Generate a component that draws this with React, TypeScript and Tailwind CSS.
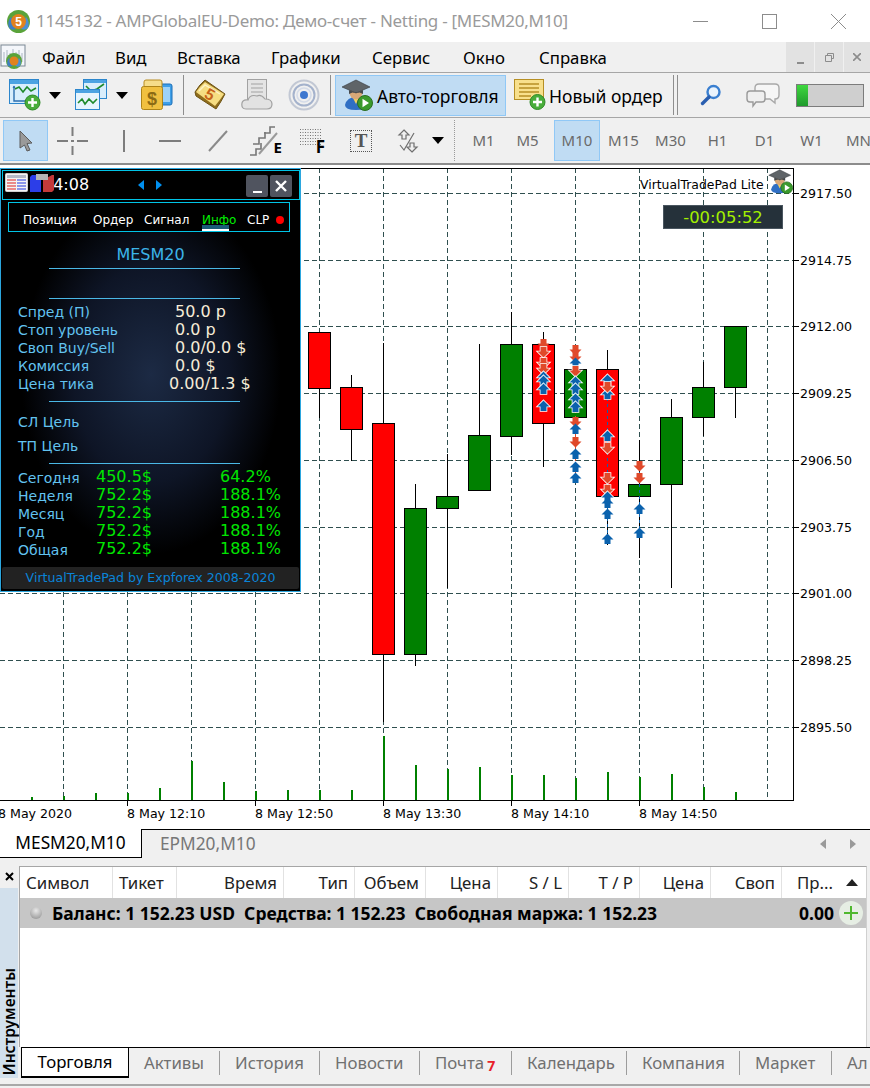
import type { ReactNode } from "react";

const ui = "font-['Noto_Sans',sans-serif]";
const pad = "font-['DejaVu_Sans',sans-serif]";

const HGRID = [193, 260, 326, 393, 460, 527, 593, 660, 727];
const PRICES = ["2917.50", "2914.75", "2912.00", "2909.25", "2906.50", "2903.75", "2901.00", "2898.25", "2895.50"];
const VGRID = [63, 127, 191, 255, 319, 383, 447, 511, 575, 639, 703, 767];
const TIMES: [number, string][] = [
  [-2, "8 May 2020"],
  [127, "8 May 12:10"],
  [255, "8 May 12:50"],
  [383, "8 May 13:30"],
  [511, "8 May 14:10"],
  [639, "8 May 14:50"],
];
const VOLUMES: [number, number][] = [
  [31, 3], [63, 4], [95, 7], [127, 7], [159, 12], [191, 39], [223, 18], [255, 9], [287, 10], [319, 10], [351, 10],
  [383, 64], [415, 35], [447, 31], [479, 33], [511, 25], [543, 25], [575, 22], [607, 28], [639, 23], [671, 26],
  [703, 13], [735, 8],
];
// x, wick top, body top, body bottom, wick bottom, colour
const CANDLES: [number, number, number, number, number, string][] = [
  [319, 332, 332, 388, 418, "#ff0000"],
  [351, 375, 387, 429, 461, "#ff0000"],
  [383, 343, 423, 654, 722, "#ff0000"],
  [415, 484, 508, 654, 666, "#008000"],
  [447, 454, 496, 508, 588, "#008000"],
  [479, 344, 435, 490, 490, "#008000"],
  [511, 312, 344, 436, 455, "#008000"],
  [543, 332, 344, 423, 467, "#ff0000"],
  [575, 369, 369, 417, 417, "#008000"],
  [607, 350, 369, 496, 545, "#ff0000"],
  [639, 440, 484, 496, 558, "#008000"],
  [671, 399, 417, 484, 588, "#008000"],
  [703, 362, 387, 417, 436, "#008000"],
  [735, 326, 326, 387, 418, "#008000"],
];
// x, y, direction, outlined
const MARKS: [number, number, "u" | "d", boolean][] = [
  [543, 344, "d", false], [543, 352, "d", true], [543, 363, "d", true], [543, 369, "d", true],
  [543, 377, "u", true], [543, 381, "u", true], [543, 389, "u", true], [543, 406, "u", true],
  [575, 350, "d", false], [575, 357, "d", false], [575, 363, "u", false], [575, 371, "d", true],
  [575, 382, "u", true], [575, 389, "u", true], [575, 399, "u", true], [575, 407, "u", true],
  [575, 422, "d", false], [575, 429, "u", false], [575, 442, "d", false], [575, 454, "u", false],
  [575, 467, "u", false], [575, 478, "u", false],
  [607, 380, "u", true], [607, 394, "u", true], [607, 387, "d", true], [607, 436, "u", true], [607, 448, "d", true],
  [607, 478, "d", true], [607, 490, "d", true], [607, 497, "u", true], [607, 503, "u", false],
  [607, 514, "u", false], [607, 539, "u", false],
  [639, 466, "d", false], [639, 478, "d", false], [639, 509, "u", false], [639, 533, "u", false],
];

function Chart() {
  return (
    <svg width="870" height="663" viewBox="0 166 870 663" className="block">
      <g stroke="#2f4f4f" strokeDasharray="5 3" shapeRendering="crispEdges">
        {HGRID.map((y) => <line key={y} x1="0" x2="793" y1={y + 0.5} y2={y + 0.5} />)}
        {VGRID.map((x) => <line key={x} x1={x + 0.5} x2={x + 0.5} y1="168" y2="800" />)}
      </g>
      <g fill="#008000" shapeRendering="crispEdges">
        {VOLUMES.map(([x, h]) => <rect key={x} x={x} y={800 - h} width="2" height={h} />)}
      </g>
      {CANDLES.map(([x, wt, bt, bb, wb, c]) => (
        <g key={x} shapeRendering="crispEdges">
          <line x1={x + 0.5} x2={x + 0.5} y1={wt} y2={wb} stroke="#000" />
          <rect x={x - 10.5} y={bt + 0.5} width="22" height={bb - bt} fill={c} stroke="#000" />
        </g>
      ))}
      <g strokeDasharray="3 3" shapeRendering="crispEdges">
        <line x1="575.5" x2="575.5" y1="350" y2="478" stroke="#e0492a" />
        <line x1="607.5" x2="607.5" y1="380" y2="540" stroke="#0b62ad" />
        <line x1="639.5" x2="639.5" y1="466" y2="533" stroke="#0b62ad" />
      </g>
      {MARKS.map(([x, y, d, o], i) => (
        <path
          key={i}
          transform={`translate(${x + 0.5} ${y}) scale(1 ${d === "u" ? 1 : -1})`}
          d="M0 -5.5 L6 0.5 L3 0.5 L3 5 L-3 5 L-3 0.5 L-6 0.5 Z"
          fill={d === "u" ? "#0b62ad" : "#e0492a"}
          stroke={o ? "#fff" : "none"}
          strokeWidth="1.6"
          paintOrder="stroke"
        />
      ))}
      <g stroke="#000" shapeRendering="crispEdges">
        <line x1="0" x2="794" y1="168.5" y2="168.5" />
        <line x1="793.5" x2="793.5" y1="168" y2="801" />
        <line x1="0" x2="794" y1="800.5" y2="800.5" />
        {HGRID.map((y) => <line key={y} x1="793" x2="799" y1={y + 0.5} y2={y + 0.5} />)}
        {TIMES.slice(1).map(([x]) => <line key={x} x1={x + 0.5} x2={x + 0.5} y1="800" y2="806" />)}
      </g>
      <g fontFamily="'DejaVu Sans',sans-serif" fontSize="12.6" fill="#000">
        {PRICES.map((p, i) => <text key={p} x="800" y={HGRID[i] + 5}>{p}</text>)}
        {TIMES.map(([x, t]) => <text key={t} x={x} y="818">{t}</text>)}
        <text x="640" y="189" fontSize="12.4">VirtualTradePad Lite</text>
      </g>
      <g transform="translate(768 169)"><HatIcon size={25} /></g>
      <rect x="663.5" y="205.5" width="119" height="23" fill="#25313a" stroke="#4a5660" />
      <text x="723" y="223" textAnchor="middle" fontFamily="'DejaVu Sans',sans-serif" fontSize="16.4" fill="#a4f000">-00:05:52</text>
    </svg>
  );
}

function HatIcon({ size = 32 }: { size?: number }) {
  return (
    <svg width={size} height={size} viewBox="0 0 32 32">
      <path d="M4 26 Q6 18 15 18 Q24 18 26 26 Q26 31 15 31 Q4 31 4 26Z" fill="#2f6fc4" />
      <path d="M12 19 L15 25 L18 19Z" fill="#f2d060" />
      <ellipse cx="15" cy="14" rx="6.5" ry="6.5" fill="#d8a878" />
      <path d="M1 8 L15 1 L29 8 L15 14Z" fill="#5f6468" stroke="#33383c" strokeWidth=".6" />
      <path d="M8 11 L8 15 Q15 11 22 15 L22 11 L15 14Z" fill="#44494d" />
      <circle cx="24" cy="24" r="7.5" fill="#3a9a2c" stroke="#2b6e22" />
      <path d="M21.5 19.8 L28 24 L21.5 28.2Z" fill="#fff" />
    </svg>
  );
}

function AppLogo() {
  return (
    <svg width="25" height="25" viewBox="0 0 25 25">
      <circle cx="12.5" cy="12.5" r="11.5" fill="#5aa33a" />
      <path d="M3 19 Q1 12 5 8 L11 18 Q8 23 3 19Z" fill="#3e7fc4" />
      <path d="M22 19 Q24 12 20 8 L14 18 Q17 23 22 19Z" fill="#4a90d4" />
      <circle cx="12.5" cy="12.5" r="7.5" fill="#e0821e" />
      <text x="12.5" y="17" textAnchor="middle" fontSize="12" fontWeight="700" fontFamily="'Liberation Sans',sans-serif" fill="#fff">5</text>
    </svg>
  );
}

function MenuLogo() {
  return (
    <svg width="26" height="26" viewBox="0 0 26 26">
      <rect x="1" y="1" width="24" height="21" fill="#f4f6fa" stroke="#7b8794" />
      <path d="M4 18 V8 M7 18 V6 M10 18 V9 M13 18 V5 M16 18 V8 M19 18 V6 M22 18 V9" stroke="#a9b4c2" strokeWidth="1" />
      <circle cx="14" cy="17" r="8" fill="#5aa33a" />
      <path d="M8 22 Q6 17 9 14 L13 21 Q11 24 8 22Z" fill="#3e7fc4" />
      <path d="M20 22 Q22 17 19 14 L15 21 Q17 24 20 22Z" fill="#4a90d4" />
      <circle cx="14" cy="17" r="4.5" fill="#e0821e" />
    </svg>
  );
}

function GreenPlus({ cx, cy, r }: { cx: number; cy: number; r: number }) {
  return (
    <g>
      <circle cx={cx} cy={cy} r={r} fill="#49ad3b" stroke="#2e8a27" />
      <path d={`M${cx - r + 3} ${cy} H${cx + r - 3} M${cx} ${cy - r + 3} V${cy + r - 3}`} stroke="#fff" strokeWidth="2.4" />
    </g>
  );
}

function NewChartIcon() {
  return (
    <svg width="32" height="32" viewBox="0 0 32 32">
      <rect x=".5" y=".5" width="29" height="24" fill="#d9eefc" stroke="#2c86cc" />
      <rect x="1" y="1" width="28" height="4" fill="#4ba3e2" />
      <path d="M6 10 L10 8 L14 13 L18 8 L22 12 L27 9" fill="none" stroke="#1f8a2c" strokeWidth="1.6" />
      <path d="M5 7 V22 H26" fill="none" stroke="#2c6fb0" strokeWidth="1.4" />
      <path d="M3.5 9 L5 6.5 L6.5 9Z M24 20.5 L26.5 22 L24 23.5Z" fill="#2c6fb0" />
      <GreenPlus cx={23.5} cy={23.5} r={7.5} />
    </svg>
  );
}

function ProfilesIcon() {
  return (
    <svg width="32" height="32" viewBox="0 0 32 32">
      <rect x="8.5" y=".5" width="23" height="19" fill="#d9eefc" stroke="#2c86cc" />
      <rect x="9" y="1" width="22" height="3" fill="#4ba3e2" />
      <path d="M11 7 L16 12 L22 10 L29 5" fill="none" stroke="#1f8a2c" strokeWidth="1.6" />
      <rect x=".5" y="10.5" width="24" height="20" fill="#e6f4fd" stroke="#2c86cc" />
      <rect x="1" y="11" width="23" height="3" fill="#4ba3e2" />
      <path d="M3 24 L7 20 L10 25 L14 20 L18 24 L22 20" fill="none" stroke="#1f8a2c" strokeWidth="1.6" />
    </svg>
  );
}

function DollarIcon() {
  return (
    <svg width="32" height="32" viewBox="0 0 32 32">
      <rect x="11" y="5" width="20" height="21" rx="2" fill="#3f9fe8" stroke="#1b6fb8" />
      <rect x="22" y="8" width="7" height="15" fill="#9dd2f7" />
      <rect x="3" y="1" width="18" height="8" rx="2" fill="#f6dd8a" stroke="#b88c20" />
      <rect x=".5" y="7.5" width="21" height="23" rx="2" fill="#f0c040" stroke="#ae8418" />
      <text x="11" y="26" textAnchor="middle" fontSize="18" fontWeight="700" fontFamily="'Liberation Sans',sans-serif" fill="#8c6a14">$</text>
    </svg>
  );
}

function BookIcon() {
  return (
    <svg width="32" height="32" viewBox="0 0 32 32">
      <path d="M1 13 Q6 5 11 1 L31 15 Q27 23 22 30 L2 17Z" fill="#8f6d1c" stroke="#6d5314" />
      <path d="M2 13 Q6 7 11 3 L30 15 Q26 21 21 27Z" fill="#f6dd82" />
      <path d="M5 12 L11 6 L26 15" fill="none" stroke="#fff3c4" strokeWidth="1.4" />
      <text x="16" y="21" textAnchor="middle" fontSize="16" fontWeight="700" fontFamily="'Liberation Sans',sans-serif" fill="#c8641a" transform="rotate(30 16 15)">5</text>
    </svg>
  );
}

function CloudIcon() {
  return (
    <svg width="32" height="32" viewBox="0 0 32 32">
      <rect x="6.5" y=".5" width="19" height="22" fill="#e4e4e4" stroke="#a2a2a2" />
      <path d="M10 5 H22 M10 9 H22 M10 13 H22" stroke="#b8b8b8" strokeWidth="1.5" />
      <path d="M5 30 Q0 30 1 24 Q2 20 7 21 Q9 15 16 17 Q20 15 24 20 Q31 20 31 25 Q31 30 26 30Z" fill="#e2e2e2" stroke="#a2a2a2" strokeWidth="1.2" />
    </svg>
  );
}

function SignalIcon() {
  return (
    <svg width="32" height="32" viewBox="0 0 32 32" fill="none">
      <circle cx="16" cy="16" r="14.5" stroke="#c2c8d4" strokeWidth="2" />
      <circle cx="16" cy="16" r="10.5" stroke="#a4b2cc" strokeWidth="2" />
      <circle cx="16" cy="16" r="7" stroke="#d4dbe8" strokeWidth="1.6" />
      <circle cx="16" cy="16" r="4" fill="#3f78cf" />
    </svg>
  );
}

function NoteIcon() {
  return (
    <svg width="32" height="32" viewBox="0 0 32 32">
      <rect x=".5" y=".5" width="29" height="20" fill="#f8e08c" stroke="#b68f24" />
      <path d="M5 5 H25 M5 9 H25 M5 13 H25 M5 17 H17" stroke="#b68f24" strokeWidth="1.3" />
      <GreenPlus cx={23.5} cy={23} r={7.5} />
    </svg>
  );
}

function MagnifierIcon() {
  return (
    <svg width="22" height="22" viewBox="0 0 22 22" fill="none">
      <circle cx="13.5" cy="8" r="6" stroke="#3a7fd0" strokeWidth="2.4" fill="#eaf3fc" />
      <path d="M9 13 L2.5 19.5" stroke="#2a5fb0" strokeWidth="3.4" strokeLinecap="round" />
    </svg>
  );
}

function ChatIcon() {
  return (
    <svg width="34" height="26" viewBox="0 0 34 26">
      <path d="M13 2 H29 Q33 2 33 6 V13 Q33 17 29 17 L29 21 L24 17 H13 Q9 17 9 13 V6 Q9 2 13 2Z" fill="#f6f6f6" stroke="#a8a8a8" strokeWidth="1.4" />
      <path d="M4 9 H16 Q19 9 19 12 V17 Q19 20 16 20 H10 L7 24 L7 20 H4 Q1 20 1 17 V12 Q1 9 4 9Z" fill="#efefef" stroke="#999" strokeWidth="1.4" />
    </svg>
  );
}

function DropArrow() {
  return <div className="w-0 h-0 border-x-[6px] border-x-transparent border-t-[7px] border-t-black" />;
}

function Sep({ ml }: { ml: string }) {
  return <div className={`${ml} w-px self-stretch my-[2px] bg-[#8e8e8e]`} />;
}

function ToolbarOne() {
  return (
    <div className={`${ui} h-[44px] flex items-center pl-[9px] text-[17.5px] text-black`}>
      <NewChartIcon />
      <div className="ml-[8px]"><DropArrow /></div>
      <div className="ml-[14px]"><ProfilesIcon /></div>
      <div className="ml-[9px]"><DropArrow /></div>
      <div className="ml-[13px]"><DollarIcon /></div>
      <Sep ml="ml-[10px]" />
      <div className="ml-[10px]"><BookIcon /></div>
      <div className="ml-[15px]"><CloudIcon /></div>
      <div className="ml-[15px]"><SignalIcon /></div>
      <Sep ml="ml-[10px]" />
      <div className="ml-[4px] w-[171px] h-[41px] flex items-center pl-[5px] bg-[#c0dcf3] border border-[#90c8f6]">
        <HatIcon />
        <span className="ml-[4px] pt-[3px] whitespace-nowrap">Авто-торговля</span>
      </div>
      <div className="ml-[8px]"><NoteIcon /></div>
      <span className="ml-[3px] pt-[3px] w-[117px] whitespace-nowrap">Новый ордер</span>
      <Sep ml="ml-[7px]" />
      <Sep ml="ml-[3px]" />
      <div className="ml-[22px]"><MagnifierIcon /></div>
      <div className="ml-[24px]"><ChatIcon /></div>
      <div className="ml-[16px] w-[68px] h-[23px] bg-[#cfcfcf] border border-[#7c7c7c]">
        <div className="w-[11px] h-full bg-gradient-to-b from-[#3fd83f] to-[#1f9a2c]" />
      </div>
    </div>
  );
}

function ToolGlyph({ children, w, ml }: { children: ReactNode; w: number; ml: string }) {
  return (
    <svg width={w} height="32" viewBox={`0 0 ${w} 32`} className={ml} fill="none">
      {children}
    </svg>
  );
}

const TIMEFRAMES: [string, string][] = [
  ["M1", "w-[47px]"],
  ["M5", "w-[47px] pr-[6px]"],
  ["M10", "w-[46px] bg-[#c0dcf3] border border-[#90c8f6]"],
  ["M15", "w-[47px]"],
  ["M30", "w-[47px]"],
  ["H1", "w-[47px]"],
  ["D1", "w-[47px]"],
  ["W1", "w-[47px]"],
  ["MN", "w-[47px]"],
];

function ToolbarTwo() {
  return (
    <div className={`${ui} h-[45px] flex items-center pl-[3px] overflow-hidden`}>
      <div className="w-[45px] h-[41px] flex items-center justify-center shrink-0 bg-[#c0dcf3] border border-[#90c8f6]">
        <svg width="16" height="22" viewBox="0 0 16 22">
          <path d="M2 1 L14 13 L9 13.5 L12 20 L9 21 L6.5 15 L2 18Z" fill="#9a9a9a" stroke="#5c5c5c" />
        </svg>
      </div>
      <ToolGlyph w={31} ml="ml-[9px] shrink-0">
        <path d="M0 16 H11 M20 16 H31 M15.5 2 V11 M15.5 21 V30 M14 16 H17" stroke="#7d7d7d" strokeWidth="2" />
      </ToolGlyph>
      <Sep ml="ml-[10px]" />
      <ToolGlyph w={4} ml="ml-[24px] shrink-0"><path d="M2 5 V27" stroke="#7d7d7d" strokeWidth="2" /></ToolGlyph>
      <ToolGlyph w={22} ml="ml-[33px] shrink-0"><path d="M0 16 H22" stroke="#7d7d7d" strokeWidth="2" /></ToolGlyph>
      <ToolGlyph w={20} ml="ml-[27px] shrink-0"><path d="M1 26 L19 6" stroke="#8a8a8a" strokeWidth="2" /></ToolGlyph>
      <div className="ml-[21px] shrink-0 w-[33px] h-[32px] relative">
        <svg width="33" height="32" viewBox="0 0 33 32" fill="none">
          <path d="M1 30 L7 30 L7 24 L12 24 L12 18 M4 19 L10 19 L10 13 L16 13 L16 7 M15 8 L21 8 L21 2 L26 2" stroke="#777" strokeWidth="1.6" />
          <path d="M10 29 L28 8" stroke="#9a9a9a" strokeWidth="2" />
        </svg>
        <span className="absolute right-0 bottom-[2px] text-[15px] font-bold leading-none text-black">E</span>
      </div>
      <div className="ml-[18px] shrink-0 w-[25px] h-[32px] relative">
        <svg width="22" height="18" viewBox="0 0 22 18" stroke="#777" strokeDasharray="1 1.5" className="mt-[3px]">
          {[1, 4, 7, 10, 13, 16].map((y) => <line key={y} x1="0" x2="22" y1={y + 0.5} y2={y + 0.5} />)}
        </svg>
        <span className="absolute right-0 bottom-[2px] text-[17px] font-bold leading-none text-black">F</span>
      </div>
      <div className="ml-[25px] shrink-0 w-[22px] h-[22px] flex items-center justify-center border border-dotted border-[#555] font-['Liberation_Serif',serif] text-[19px] font-bold text-[#555] leading-none">T</div>
      <ToolGlyph w={22} ml="ml-[25px] shrink-0">
        <path d="M7 5 L12 10 L9 10 L9 14 L5 14 L5 10 L2 10Z M15 27 L20 22 L17 22 L17 18 L13 18 L13 22 L10 22Z" stroke="#6f6f6f" strokeWidth="1.2" />
        <path d="M3 20 L7 25 L17 8" stroke="#6f6f6f" strokeWidth="1.2" />
      </ToolGlyph>
      <div className="ml-[13px] shrink-0"><DropArrow /></div>
      <Sep ml="ml-[7px]" />
      <div className="ml-[3px] w-px self-stretch my-[2px] border-l border-dotted border-[#9a9a9a] shrink-0" />
      <div className="ml-[5px] flex text-[15px] text-[#6a6a6a] shrink-0">
        {TIMEFRAMES.map(([t, cls]) => (
          <div key={t} className={`${cls} h-[41px] flex items-center justify-center`}>
            {t}
          </div>
        ))}
      </div>
    </div>
  );
}

const SPEC: [string, string][] = [
  ["Спред (П)", "50.0 p"],
  ["Стоп уровень", "0.0 p"],
  ["Своп Buy/Sell", "0.0/0.0 $"],
  ["Комиссия", "0.0 $"],
  ["Цена тика", "0.00/1.3 $"],
];
const STATS: [string, string, string][] = [
  ["Сегодня", "450.5$", "64.2%"],
  ["Неделя", "752.2$", "188.1%"],
  ["Месяц", "752.2$", "188.1%"],
  ["Год", "752.2$", "188.1%"],
  ["Общая", "752.2$", "188.1%"],
];

function PadLine({ mt }: { mt: string }) {
  return <div className={`${mt} ml-[48px] w-[191px] h-px shrink-0 bg-[#4ab8e6]`} />;
}

function TradePad() {
  return (
    <div
      className={`${pad} absolute left-0 top-[3px] w-[301px] h-[424px] flex flex-col border border-[#2ba6de] bg-[radial-gradient(ellipse_130px_180px_at_150px_205px,#1c2a44_0%,#0e1526_60%,#000_100%)] text-[14px] text-[#62c3f0]`}
    >
      <div className="relative mt-px ml-px w-[298px] h-[30px] shrink-0 flex items-center border border-[#00c4e6] bg-black">
        <span className="ml-[40px] w-[46px] text-[16px] text-white">14:08</span>
        <svg className="absolute left-[2px] top-[2px]" width="23" height="19" viewBox="0 0 23 19">
          <rect x=".5" y=".5" width="22" height="18" rx="1" fill="#f4f4f4" stroke="#cfcfcf" />
          <rect x="2" y="2" width="19" height="3" fill="#b4b8c8" />
          <path d="M2 7 H11 M2 10 H11 M2 13 H11 M2 16 H11" stroke="#e98a8a" strokeWidth="2" />
          <path d="M12 7 H21 M12 10 H21 M12 13 H21 M12 16 H21" stroke="#8a96e9" strokeWidth="2" />
        </svg>
        <svg className="absolute left-[27px] top-[3px]" width="24" height="18" viewBox="0 0 24 18">
          <path d="M0 3 L2 1 H11 V18 H0Z" fill="#2c3ee8" />
          <path d="M13 6 L22 1 H24 V16 L22 18 H13Z" fill="#c43a3a" />
          <rect x="6" y="0" width="12" height="6" fill="#b4b4b4" />
        </svg>
        <div className="absolute left-[135px] top-[9px] flex gap-[12px]">
          <div className="w-0 h-0 border-y-[5px] border-y-transparent border-r-[6px] border-r-[#0090f0]" />
          <div className="w-0 h-0 border-y-[5px] border-y-transparent border-l-[6px] border-l-[#0090f0]" />
        </div>
        <div className="absolute left-[243px] top-[4px] w-[22px] h-[22px] rounded-[2px] bg-[#50545f] flex items-end justify-center pb-[4px]">
          <div className="w-[9px] h-[2px] bg-white" />
        </div>
        <div className="absolute left-[267px] top-[4px] w-[22px] h-[22px] rounded-[2px] bg-[#50545f] flex items-center justify-center">
          <svg width="12" height="12" viewBox="0 0 12 12"><path d="M1 1 L11 11 M11 1 L1 11" stroke="#fff" strokeWidth="2.4" /></svg>
        </div>
      </div>

      <div className="mt-[2px] ml-[7px] pt-[5px] w-[282px] h-[30px] shrink-0 relative flex items-center border border-[#00c4e6] text-[12px] text-white bg-black">
        <span className="ml-[14px] w-[70px]">Позиция</span>
        <span className="w-[51px]">Ордер</span>
        <span className="w-[58px]">Сигнал</span>
        <span className="w-[45px] text-[#00f000]">Инфо</span>
        <span className="w-[29px]">CLP</span>
        <div className="w-[8px] h-[8px] rounded-full bg-[#ff0000]" />
        <div className="absolute left-[193px] bottom-0 w-[27px] h-[6px] border-b-2 border-white bg-[#1a5c78]" />
      </div>

      <div className="h-[36px] shrink-0 pt-[9px] flex items-center justify-center text-[16px] text-[#3cb4e8]">MESM20</div>
      <PadLine mt="mt-0" />
      <PadLine mt="mt-[29px]" />

      <div className="mt-[4px] flex flex-col">
        {SPEC.map(([label, value]) => (
          <div key={label} className="h-[18px] flex items-center">
            <span className="ml-[17px] w-[157px] whitespace-nowrap">{label}</span>
            <span className={`${label === "Цена тика" ? "-ml-[6px]" : ""} text-[16px] text-[#f6ecd8] whitespace-nowrap`}>{value}</span>
          </div>
        ))}
      </div>
      <PadLine mt="mt-[8px]" />
      <div className="mt-[8px] ml-[17px] h-[24px] shrink-0 flex items-center">СЛ Цель</div>
      <div className="ml-[17px] h-[24px] shrink-0 flex items-center">ТП Цель</div>
      <PadLine mt="mt-[5px]" />

      <div className="mt-[5px] flex flex-col">
        {STATS.map(([label, money, pct]) => (
          <div key={label} className="h-[18px] flex items-center">
            <span className="ml-[17px] w-[78px]">{label}</span>
            <span className="w-[124px] pb-[3px] text-[16px] text-[#00e600]">{money}</span>
            <span className="pb-[3px] text-[16px] text-[#00e600]">{pct}</span>
          </div>
        ))}
      </div>

      <div className="mt-[8px] mx-[1px] h-[22px] shrink-0 flex items-center justify-center rounded-[2px] bg-[#222222] text-[12.6px] text-[#0a84d8]">
        VirtualTradePad by Expforex 2008-2020
      </div>
    </div>
  );
}

const COLUMNS: [string, number, string][] = [
  ["Символ", 93, "justify-start pl-[6px]"],
  ["Тикет", 64, "justify-start pl-[6px]"],
  ["Время", 107, "justify-end pr-[6px]"],
  ["Тип", 71, "justify-end pr-[6px]"],
  ["Объем", 71, "justify-end pr-[6px]"],
  ["Цена", 72, "justify-end pr-[6px]"],
  ["S / L", 71, "justify-end pr-[6px]"],
  ["T / P", 71, "justify-end pr-[6px]"],
  ["Цена", 71, "justify-end pr-[6px]"],
  ["Своп", 71, "justify-end pr-[6px]"],
];

function Terminal() {
  return (
    <div className={`${ui} h-[219px] flex text-[16.8px] text-[#222]`}>
      <div className="w-[19px] shrink-0 flex flex-col">
        <div className="h-[23px] flex items-center justify-center">
          <svg width="9" height="9" viewBox="0 0 9 9"><path d="M1 1 L8 8 M8 1 L1 8" stroke="#000" strokeWidth="2" /></svg>
        </div>
        <div className="h-[190px] w-[18px] flex items-center justify-start flex-col-reverse bg-[#d2e0ec]">
          <span className="mb-[3px] [writing-mode:vertical-rl] rotate-180 text-[15.6px] font-semibold leading-[18px] text-black">Инструменты</span>
        </div>
      </div>
      <div className="flex-1 flex flex-col min-w-0">
        <div className="mt-px h-[181px] w-[848px] flex flex-col bg-white border-t border-t-[#a6a6a6] border-l border-l-[#a6a6a6] border-r border-r-[#d0d0d0]">
          <div className="h-[31px] flex shrink-0">
            {COLUMNS.map(([name, w, align], i) => (
              <div key={i} style={{ width: w }} className={`h-full flex items-center border-r border-[#e2e2e2] whitespace-nowrap ${align}`}>
                {name}
              </div>
            ))}
            <div className="flex-1 flex items-center justify-between pl-[15px] pr-[8px]">
              <span>Пр...</span>
              <div className="w-0 h-0 border-x-[6px] border-x-transparent border-b-[7px] border-b-[#222]" />
            </div>
          </div>
          <div className="h-[30px] shrink-0 flex items-center bg-[#c6c6c6] text-[17.5px] font-bold text-black">
            <div className="ml-[10px] w-[12px] h-[12px] rounded-full bg-[radial-gradient(circle_at_50%_30%,#e8e8e8,#8c8c8c)]" />
            <span className="ml-[10px] pt-px whitespace-pre">Баланс: 1 152.23 USD  Средства: 1 152.23  Свободная маржа: 1 152.23</span>
            <span className="ml-auto pt-px">0.00</span>
            <div className="ml-[5px] mr-[3px] w-[24px] h-[24px] rounded-full bg-[#e6eee4] flex items-center justify-center">
              <svg width="16" height="16" viewBox="0 0 16 16"><path d="M1 8 H15 M8 1 V15" stroke="#4fb82e" strokeWidth="2" /></svg>
            </div>
          </div>
        </div>
        <BottomTabs />
      </div>
    </div>
  );
}

const BOTTOM_TABS: [string, number][] = [
  ["Активы", 91],
  ["История", 100],
  ["Новости", 100],
  ["Почта", 92],
  ["Календарь", 115],
  ["Компания", 113],
  ["Маркет", 92],
  ["Ал", 38],
];

function BottomTabs() {
  return (
    <div className="flex h-[34px] text-[#707070] bg-[#f0f0f0] overflow-hidden">
      <div className="ml-[2px] w-[108px] shrink-0 h-[31px] flex items-center justify-center bg-white border-x border-b-2 border-t border-black text-black">
        Торговля
      </div>
      <div className="flex-1 h-[31px] flex items-center border-t border-black">
        {BOTTOM_TABS.map(([name, w]) => (
          <div key={name} style={{ width: w }} className={`h-[24px] shrink-0 flex items-center pl-[15px] whitespace-nowrap ${name === "Ал" ? "" : "border-r border-[#9c9c9c]"}`}>
            {name}
            {name === "Почта" && <span className="ml-[3px] mt-[4px] text-[14px] font-bold text-[#e8202a]">7</span>}
          </div>
        ))}
      </div>
    </div>
  );
}

const MENU: [string, string][] = [
  ["Файл", "w-[73px]"],
  ["Вид", "w-[62px]"],
  ["Вставка", "w-[94px]"],
  ["Графики", "w-[101px]"],
  ["Сервис", "w-[91px]"],
  ["Окно", "w-[76px]"],
  ["Справка", "w-[72px]"],
];

export default function App() {
  return (
    <div className={`${ui} w-[870px] h-[1088px] flex flex-col overflow-hidden bg-[#f0f0f0]`}>
      <div className="h-[42px] shrink-0 flex items-center bg-white">
        <div className="ml-[6px]"><AppLogo /></div>
        <span className="ml-[5px] text-[17px] tracking-[-0.28px] text-[#9a9a9a] whitespace-nowrap">1145132 - AMPGlobalEU-Demo: Демо-счет - Netting - [MESM20,M10]</span>
        <div className="ml-auto mr-[24px] flex items-center gap-[54px]">
          <div className="w-[15px] h-px bg-[#8c8c8c]" />
          <div className="w-[15px] h-[15px] border border-[#8c8c8c]" />
          <svg width="15" height="15" viewBox="0 0 15 15"><path d="M0 0 L15 15 M15 0 L0 15" stroke="#8c8c8c" /></svg>
        </div>
      </div>

      <div className="h-[30px] shrink-0 flex items-center text-[16.8px] text-black">
        <MenuLogo />
        <div className="ml-[16px] pt-[2px] flex">
          {MENU.map(([m, w]) => <span key={m} className={w}>{m}</span>)}
        </div>
        <div className="ml-auto flex h-full gap-px">
          <div className="w-[28px] flex items-end justify-center pb-[8px] bg-[#e2e2e2]"><div className="w-[7px] h-[2px] bg-[#8c8c8c]" /></div>
          <div className="w-[28px] flex items-center justify-center bg-[#e2e2e2]">
            <svg width="9" height="9" viewBox="0 0 9 9" fill="none" stroke="#8c8c8c"><path d="M2.5 2.5 V.5 H8.5 V5.5 H6.5 M.5 2.5 H6.5 V8.5 H.5Z" /></svg>
          </div>
          <div className="w-[26px] flex items-center justify-center bg-[#e2e2e2]">
            <svg width="8" height="8" viewBox="0 0 8 8"><path d="M0 0 L8 8 M8 0 L0 8" stroke="#8c8c8c" strokeWidth="1.6" /></svg>
          </div>
        </div>
      </div>
      <div className="h-px shrink-0 bg-[#a6a6a6]" />
      <ToolbarOne />
      <div className="h-px shrink-0 bg-[#a6a6a6]" />
      <ToolbarTwo />

      <div className="relative h-[666px] shrink-0 pt-px border-t-2 border-[#8c8c8c] bg-white">
        <Chart />
        <TradePad />
      </div>

      <div className="h-[29px] shrink-0 flex text-[17.3px]">
        <div className="w-[142px] flex items-center justify-center bg-white border-r border-b border-black text-black">MESM20,M10</div>
        <div className="flex-1 flex items-center border-t border-black pl-[18px] text-[#777]">
          EPM20,M10
          <div className="ml-auto flex gap-[24px] pr-[14px]">
            <div className="w-0 h-0 border-y-[5px] border-y-transparent border-r-[6px] border-r-[#9a9a9a]" />
            <div className="w-0 h-0 border-y-[5px] border-y-transparent border-l-[6px] border-l-[#9a9a9a]" />
          </div>
        </div>
      </div>
      <div className="h-[7px] shrink-0" />
      <Terminal />
      <div className="h-[2px] shrink-0 bg-[#a8a8a8]" />
    </div>
  );
}
